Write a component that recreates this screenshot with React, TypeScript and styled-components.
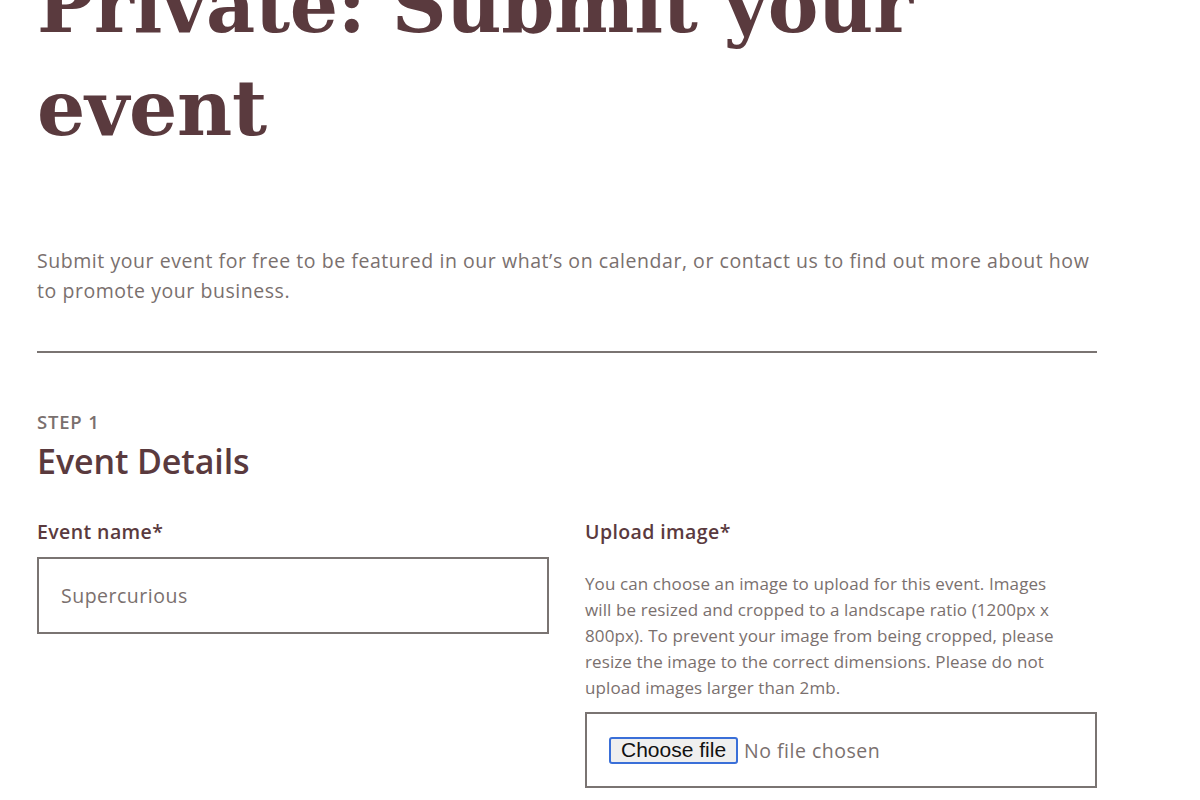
import React from "react";
import styled, { createGlobalStyle } from "styled-components";

const Global = createGlobalStyle`
  html, body { margin: 0; padding: 0; background: #ffffff; }
  body { font-family: "Open Sans", "Noto Sans", sans-serif; overflow: hidden; }
`;

const Page = styled.main`
  width: 1060px;
  margin-left: 37px;
`;

const Title = styled.h1`
  font-family: "DejaVu Serif", "Liberation Serif", serif;
  font-weight: 700;
  font-size: 76px;
  line-height: 103px;
  color: #5a3a3e;
  margin: -46px 0 0 0;
  letter-spacing: -0.3px;
`;

const Intro = styled.p`
  margin: 86px 0 0 0;
  font-size: 19.5px;
  line-height: 30px;
  color: #7a706e;
  letter-spacing: 0.55px;
`;

const Divider = styled.hr`
  border: none;
  height: 2px;
  background: #7a7472;
  margin: 45px 0 0 0;
`;

const Step = styled.div`
  margin-top: 58px;
  font-size: 18.5px;
  font-weight: 600;
  color: #7a706e;
  line-height: 22px;
  letter-spacing: 0.8px;
`;

const SectionTitle = styled.h2`
  margin: 8px 0 0 0;
  font-size: 34px;
  font-weight: 600;
  line-height: 40px;
  color: #5a3a3e;
  letter-spacing: -0.1px;
`;

const Columns = styled.div`
  display: grid;
  grid-template-columns: 512px 512px;
  column-gap: 36px;
  margin-top: 38px;
`;

const Field = styled.div`
  display: flex;
  flex-direction: column;
`;

const Label = styled.label`
  font-size: 19.5px;
  font-weight: 600;
  color: #5a3a3e;
  line-height: 26px;
  letter-spacing: 0.4px;
`;

const TextInput = styled.div`
  margin-top: 12px;
  height: 77px;
  box-sizing: border-box;
  border: 2px solid #7a7472;
  display: flex;
  align-items: center;
  padding-left: 22px;
  font-size: 19.5px;
  color: #7a706e;
  letter-spacing: 0.5px;
`;

const Help = styled.p`
  margin: 26px 0 0 0;
  max-width: 480px;
  font-size: 17px;
  line-height: 26px;
  color: #7a706e;
  letter-spacing: 0.1px;
`;

const FileBox = styled.div`
  margin-top: 11px;
  height: 76px;
  box-sizing: border-box;
  border: 2px solid #7a7472;
  display: flex;
  align-items: center;
  padding-left: 22px;
  gap: 6px;
  font-size: 19.5px;
  color: #7a706e;
  letter-spacing: 0.5px;
`;

const ChooseButton = styled.span`
  display: inline-flex;
  align-items: center;
  height: 27px;
  box-sizing: border-box;
  padding: 0 10px;
  border: 2px solid #3a6fd8;
  border-radius: 3px;
  background: #efefef;
  color: #111;
  font-family: "Liberation Sans", Arial, sans-serif;
  font-size: 21px;
  letter-spacing: 0;
`;

const Note = styled.div`
  margin-top: 10px;
  font-size: 16px;
  color: #7a706e;
`;

export default function App() {
  return (
    <>
      <Global />
      <Page>
        <Title>Private: Submit your event</Title>
        <Intro>
          Submit your event for free to be featured in our what’s on calendar, or contact us to find out more
          about how to promote your business.
        </Intro>
        <Divider />
        <Step>STEP 1</Step>
        <SectionTitle>Event Details</SectionTitle>
        <Columns>
          <Field>
            <Label>Event name*</Label>
            <TextInput>Supercurious</TextInput>
          </Field>
          <Field>
            <Label>Upload image*</Label>
            <Help>
              You can choose an image to upload for this event. Images will be resized and cropped to a landscape
              ratio (1200px x 800px). To prevent your image from being cropped, please resize the image to the
              correct dimensions. Please do not upload images larger than 2mb.
            </Help>
            <FileBox>
              <ChooseButton>Choose file</ChooseButton>
              <span>No file chosen</span>
            </FileBox>
            <Note>Max. file size: 2 MB.</Note>
          </Field>
        </Columns>
      </Page>
    </>
  );
}
